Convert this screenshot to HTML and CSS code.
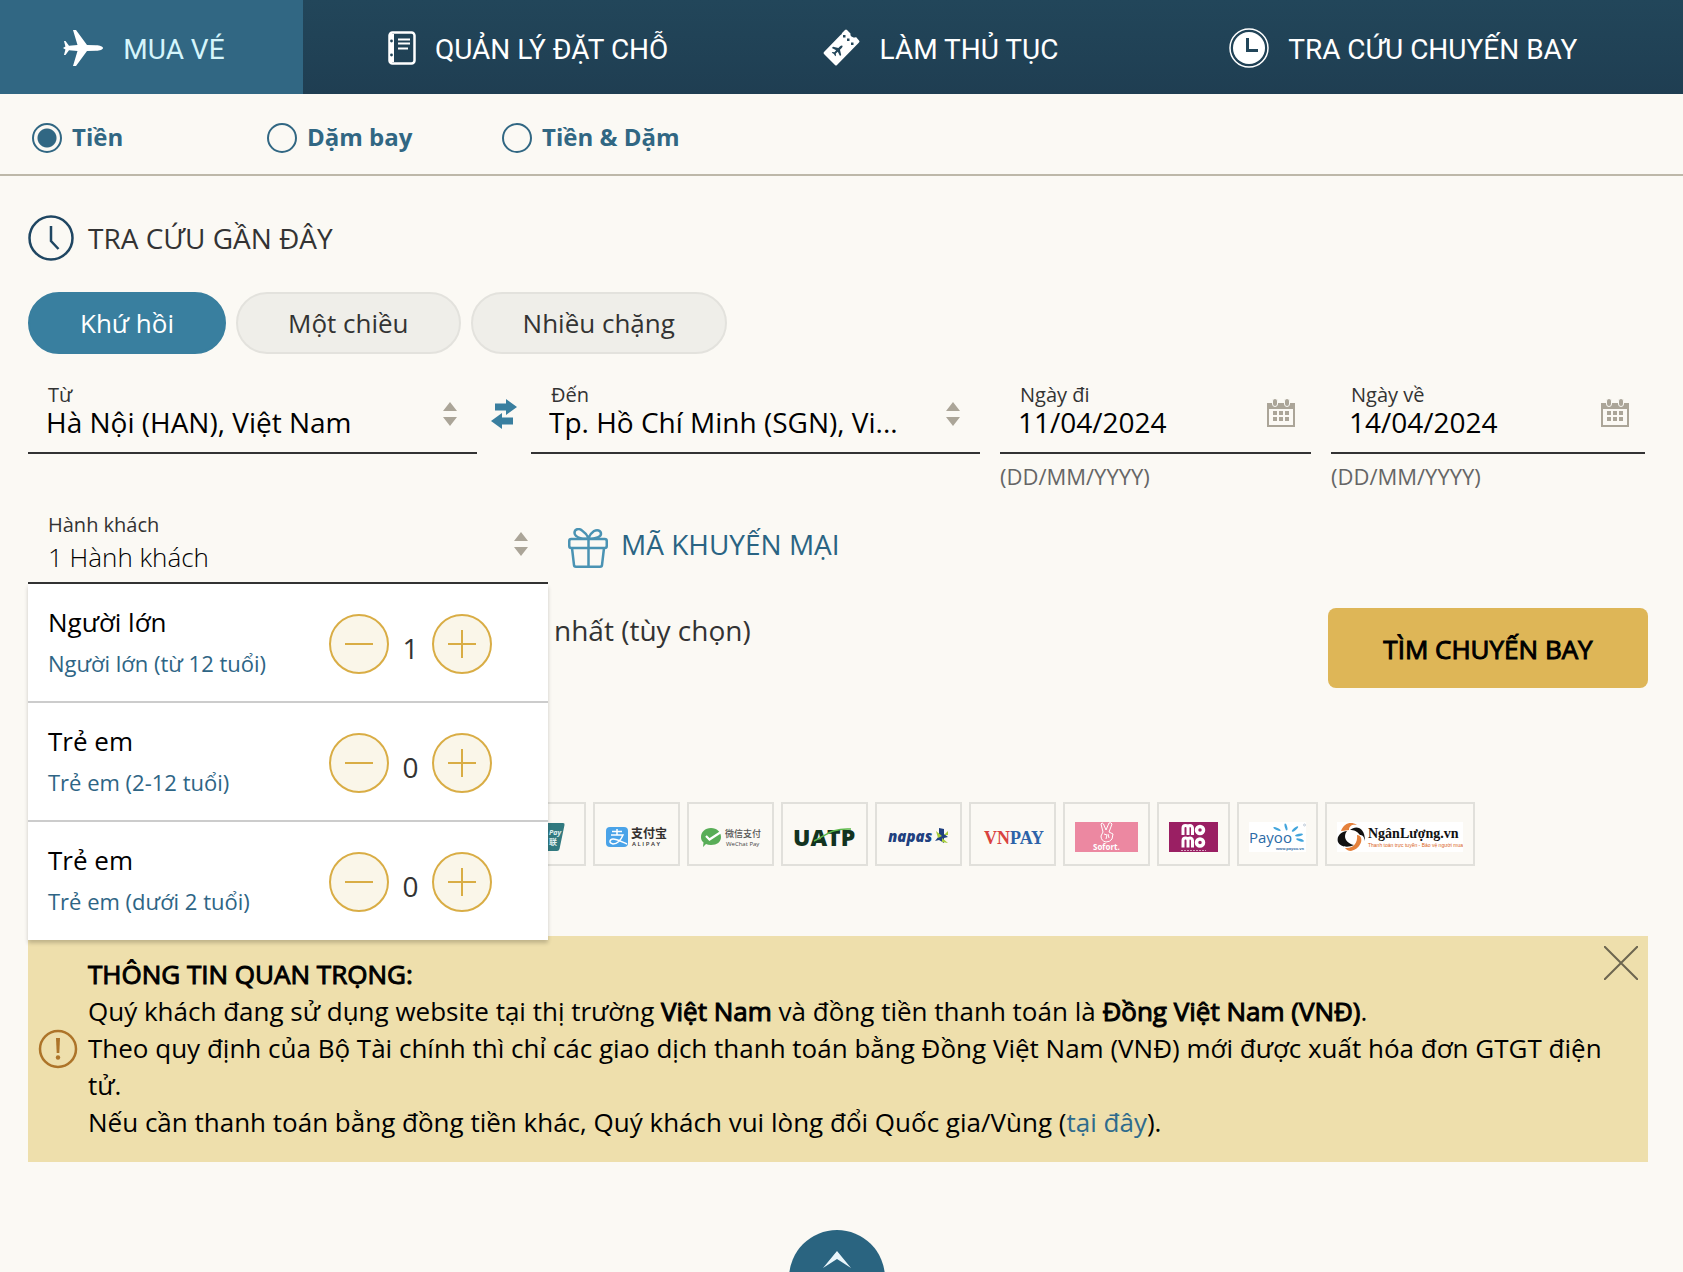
FILE: index.html
```html
<!DOCTYPE html>
<html lang="vi">
<head>
<meta charset="utf-8">
<meta name="viewport" content="width=device-width, initial-scale=1">
<title>Mua vé</title>
<link rel="stylesheet" href="styles.css">
</head>
<body>
<nav class="tabs">
  <a class="tab tab-active" href="#mua-ve">
    <svg class="tab-icon" width="42" height="38" viewBox="0 0 42 38" aria-hidden="true"><path fill="#fff" d="M41 19c0 1.500-3 2.600-7 2.800l-9 .3L14 37h-3l4.500-15L7 21.300 3.500 26H2l1.400-5.600L1 19l2.400-1.400L2 12h1.500L7 16.700l8.500-.7L11 1h3l11 14.900 9 .3c4 .2 7 1.300 7 2.800z"/></svg>
    <span>MUA VÉ</span>
  </a>
  <a class="tab" href="#quan-ly">
    <svg class="tab-icon" width="28" height="34" viewBox="0 0 28 34" aria-hidden="true"><rect x="1.500" y="1.500" width="25" height="31" rx="3" fill="none" stroke="#fff" stroke-width="2.500"/><path fill="#fff" d="M1 3h5v28H1z"/><path stroke="#fff" stroke-width="2" d="M10 8.500h12M10 12.500h12M10 17.500h10"/><circle cx="3.500" cy="10" r="1.400" fill="#22465a"/><circle cx="3.500" cy="24" r="1.400" fill="#22465a"/></svg>
    <span>QUẢN LÝ ĐẶT CHỖ</span>
  </a>
  <a class="tab" href="#lam-thu-tuc">
    <svg class="tab-icon" width="38" height="38" viewBox="0 0 38 38" aria-hidden="true"><path fill="#fff" d="M22 1q1-1 2 0l3.500 3.500q-.5 2.500 2 3.500 2 1 3.500 0l3 3.500q1 1 0 2L14 36q-1 1-2 0L1 25q-1-1 0-2L17.500 6q1.500-.5 1.500-2z"/><path fill="#22465a" d="M20 6h2.500v2.500H20zM24 9.500h2.500V12H24zM28 13.500h2.500V16H28z"/><path fill="#22465a" transform="translate(15 21) rotate(-45) scale(.82) translate(-15 -21)" d="M22.500 21c0 .9-1 1.300-2.500 1.400h-3L13.500 28h-2l1.700-5.600-3.200-.2L8.500 24H7.300l.6-3-.6-3h1.200l1.500 1.800 3.200-.2L11.500 14h2l3.500 5.600h3c1.500.1 2.500.5 2.500 1.400z"/></svg>
    <span>LÀM THỦ TỤC</span>
  </a>
  <a class="tab" href="#tra-cuu">
    <svg class="tab-icon" width="40" height="40" viewBox="0 0 40 40" aria-hidden="true"><circle cx="20" cy="20" r="19" fill="none" stroke="#fff" stroke-width="1.500"/><circle cx="20" cy="20" r="16" fill="#fff"/><path fill="none" stroke="#22465a" stroke-width="3" d="M18.500 10v12.500H29"/></svg>
    <span>TRA CỨU CHUYẾN BAY</span>
  </a>
</nav>

<form class="booking">
  <fieldset class="pay-modes">
    <label class="mode"><input type="radio" name="mode" checked><span>Tiền</span></label>
    <label class="mode"><input type="radio" name="mode"><span>Dặm bay</span></label>
    <label class="mode"><input type="radio" name="mode"><span>Tiền &amp; Dặm</span></label>
  </fieldset>

  <main class="content">
    <h2 class="recent">
      <svg width="46" height="46" viewBox="0 0 46 46" fill="none" stroke="#1f4662" stroke-width="2.500" aria-hidden="true"><circle cx="23" cy="23" r="21.500"/><path d="M23 11v15l7.500 8"/></svg>
      <span>TRA CỨU GẦN ĐÂY</span>
    </h2>

    <div class="trip-types">
      <button type="button" class="pill pill-active">Khứ hồi</button>
      <button type="button" class="pill">Một chiều</button>
      <button type="button" class="pill">Nhiều chặng</button>
    </div>

    <div class="route">
      <div class="field">
        <label for="from">Từ</label>
        <select id="from"><option>Hà Nội (HAN), Việt Nam</option></select>
        <svg class="field-icon" width="14" height="24" viewBox="0 0 14 24" aria-hidden="true"><path fill="#aba598" d="M7 0l7 9H0zM7 24l7-9H0z"/></svg>
      </div>
      <button type="button" class="swap" aria-label="Đổi chiều">
        <svg width="26" height="30" viewBox="0 0 26 30" aria-hidden="true"><path fill="#397f9f" d="M4 4.500h11V0l11 8-11 8v-4.500H4zM22 18.500H11V14L0 22l11 8v-4.500h11z"/></svg>
      </button>
      <div class="field">
        <label for="to">Đến</label>
        <select id="to"><option>Tp. Hồ Chí Minh (SGN), Vi...</option></select>
        <svg class="field-icon" width="14" height="24" viewBox="0 0 14 24" aria-hidden="true"><path fill="#aba598" d="M7 0l7 9H0zM7 24l7-9H0z"/></svg>
      </div>
      <div class="date depart">
        <div class="field">
          <label for="depart">Ngày đi</label>
          <input id="depart" type="text" value="11/04/2024">
          <svg class="field-icon" width="28" height="28" viewBox="0 0 28 28" aria-hidden="true"><path fill="#aba598" fill-rule="evenodd" d="M0 4h28v24H0zM2 10v16h24V10zM6 12h4v4H6zM12 12h4v4h-4zM18 12h4v4h-4zM6 18h4v4H6zM12 18h4v4h-4zM18 18h4v4h-4z"/><g fill="#aba598" stroke="#faf9f4"><rect x="5.500" y="-.500" width="5" height="8" rx="2.500"/><rect x="17.500" y="-.500" width="5" height="8" rx="2.500"/></g></svg>
        </div>
        <span class="hint">(DD/MM/YYYY)</span>
      </div>
      <div class="date">
        <div class="field">
          <label for="return">Ngày về</label>
          <input id="return" type="text" value="14/04/2024">
          <svg class="field-icon" width="28" height="28" viewBox="0 0 28 28" aria-hidden="true"><path fill="#aba598" fill-rule="evenodd" d="M0 4h28v24H0zM2 10v16h24V10zM6 12h4v4H6zM12 12h4v4h-4zM18 12h4v4h-4zM6 18h4v4H6zM12 18h4v4h-4zM18 18h4v4h-4z"/><g fill="#aba598" stroke="#faf9f4"><rect x="5.500" y="-.500" width="5" height="8" rx="2.500"/><rect x="17.500" y="-.500" width="5" height="8" rx="2.500"/></g></svg>
        </div>
        <span class="hint">(DD/MM/YYYY)</span>
      </div>
    </div>

    <div class="party">
      <div class="passengers">
        <div class="field field-passengers">
          <label for="passengers">Hành khách</label>
          <button type="button" id="passengers" aria-expanded="true">1 Hành khách</button>
          <svg class="field-icon" width="14" height="24" viewBox="0 0 14 24" aria-hidden="true"><path fill="#aba598" d="M7 0l7 9H0zM7 24l7-9H0z"/></svg>
        </div>
        <ul class="passenger-menu">
          <li>
            <div class="who"><strong>Người lớn</strong><span>Người lớn (từ 12 tuổi)</span></div>
            <button type="button" class="step minus" aria-label="Bớt"></button>
            <output>1</output>
            <button type="button" class="step plus" aria-label="Thêm"></button>
          </li>
          <li>
            <div class="who"><strong>Trẻ em</strong><span>Trẻ em (2-12 tuổi)</span></div>
            <button type="button" class="step minus" aria-label="Bớt"></button>
            <output>0</output>
            <button type="button" class="step plus" aria-label="Thêm"></button>
          </li>
          <li>
            <div class="who"><strong>Trẻ em</strong><span>Trẻ em (dưới 2 tuổi)</span></div>
            <button type="button" class="step minus" aria-label="Bớt"></button>
            <output>0</output>
            <button type="button" class="step plus" aria-label="Thêm"></button>
          </li>
        </ul>
      </div>
      <a class="promo" href="#khuyen-mai">
        <svg width="40" height="40" viewBox="0 0 40 40" fill="none" stroke="#4a93b3" stroke-width="2.500" aria-hidden="true"><rect x="1.250" y="11" width="37.500" height="9" rx="2"/><path d="M4 20l2 17q0 1.700 2 1.700h24q2 0 2-1.700l2-17M20.500 11v28M20.500 10C17 12 7 10 6.500 5 6.500 1 11 0 14 2.500 17 4.500 19 7 20.500 10zM20.500 10c3 1.500 12 0 12.500-4 0-4-4-4.500-7-3-3 2-4.500 4.500-5.500 7z"/></svg>
        <span>MÃ KHUYẾN MẠI</span>
      </a>
    </div>

    <div class="search-row">
      <span class="lowest">nhất (tùy chọn)</span>
      <button type="submit" class="search">TÌM CHUYẾN BAY</button>
    </div>

    <ul class="payments">
      <li class="pay">
        <svg width="63" height="30" viewBox="0 0 63 30"><path fill="#327a80" d="M20 1h32q2 0 1.500 2l-5 24q-.5 2-2.500 2H14z"/><text x="38" y="13" font-size="7" font-weight="700" font-style="italic" fill="#e3f2f2">Pay</text><text x="38" y="23" font-size="8" font-weight="700" fill="#e3f2f2">联</text></svg>
      </li>
      <li class="pay">
        <svg width="63" height="30" viewBox="0 0 63 30"><rect x="1" y="5" width="22" height="20" rx="4" fill="#4aa3e8"/><path fill="none" stroke="#fff" stroke-width="1.500" d="M7 9.500h10M12 7v6M6 13h12c-2 5-6 9-10 9-5-1-3-5 0-5 4 0 9 3 14 5"/><text x="26" y="16" font-size="12" font-weight="700" fill="#33302f">支付宝</text><text x="27" y="24" font-size="6" font-weight="600" fill="#33302f">A L I P A Y</text></svg>
      </li>
      <li class="pay">
        <svg width="63" height="30" viewBox="0 0 63 30"><path fill="#58ad57" d="M12 6c6 0 10 4 10 9s-4 8-10 8q-3 0-5-1l-3 3 .5-4.500C2.500 19 2 17 2 15c0-5 4-9 10-9z"/><path fill="none" stroke="#fff" stroke-width="2.200" d="M7 14l3.500 3.500L22 10"/><text x="26" y="15" font-size="9" font-weight="500" fill="#555">微信支付</text><text x="27" y="24" font-size="6" fill="#444">WeChat Pay</text></svg>
      </li>
      <li class="pay">
        <svg width="63" height="30" viewBox="0 0 63 30"><text x="0" y="24" font-size="23" font-weight="800" fill="#12331f">UATP</text><path fill="none" stroke="#5cb949" stroke-width="1.500" d="M21 19C34 13 38 6 58 7"/></svg>
      </li>
      <li class="pay">
        <svg width="63" height="30" viewBox="0 0 63 30"><text x="1" y="20" font-size="15" font-weight="800" font-style="italic" fill="#20407f">napas</text><path fill="#20407f" d="M52 6l5 1v5l4 3-4 1v5l-5-3-4 1 4-5z"/><path fill="#a6cd3d" d="M49 9l6 5-4 2zM57 13l4-4v4zM55 16l6 5-6-1z"/></svg>
      </li>
      <li class="pay">
        <svg width="63" height="30" viewBox="0 0 63 30"><text x="3" y="22" class="vnpay" font-size="18" font-weight="700" fill="#d9423f">VN<tspan fill="#2c63a8">PAY</tspan></text></svg>
      </li>
      <li class="pay">
        <svg width="63" height="30" viewBox="0 0 63 30"><path fill="#ec88a1" d="M0 0h63v30H0z"/><path fill="none" stroke="#fff" stroke-width="1" stroke-linejoin="round" d="M28 10L26 2q1-2 2.500 0L31 8l3-7q2-1 3 1l-3 8 4 2-1 5q-2 3-6 3-5-1-5-6zM29 12l3 1-1 4M33 12l1 4"/><text x="18" y="28" font-size="8" font-weight="700" fill="#fff">Sofort.</text></svg>
      </li>
      <li class="pay">
        <svg width="49" height="30" viewBox="0 0 49 30"><path fill="#9a1f63" d="M0 0h49v30H0z"/><path fill="none" stroke="#fff" stroke-width="3" d="M14 13V6q0-2.500 2.500-2.500T19 6v7M19 6q0-2.500 2-2.500T23.500 6v7M14 25.500v-7q0-2.500 2.500-2.500t2.500 2.500v7M19 18.500q0-2.500 2-2.500t2.500 2.500v7"/><g fill="none" stroke="#fff" stroke-width="3.500"><circle cx="31" cy="8" r="3.500"/><circle cx="31" cy="20.500" r="3.500"/></g><path stroke="#d9a3c1" stroke-dasharray="2 1" d="M12 28.500h25"/></svg>
      </li>
      <li class="pay">
        <svg width="57" height="30" viewBox="0 0 57 30"><path fill="#fff" d="M0 0h57v30H0z"/><text x="0" y="21" font-size="15" fill="#2b6aa6">Payoo</text><g fill="#42a5dc"><ellipse cx="28" cy="7" rx="4" ry="1.200" transform="rotate(25 28 7)"/><ellipse cx="37" cy="5" rx="3.500" ry="1.200" transform="rotate(75 37 5)"/><ellipse cx="46" cy="7" rx="4" ry="1.200" transform="rotate(-40 46 7)"/><ellipse cx="50" cy="13" rx="4" ry="1.200" transform="rotate(-12 50 13)"/><ellipse cx="51" cy="18" rx="4" ry="1.200" transform="rotate(18 51 18)"/></g><circle cx="55.500" cy="3" r="1" fill="none" stroke="#a9b9cc" stroke-width=".7"/><text x="27" y="28" class="slogan" font-size="4" font-weight="700" fill="#2b6aa6">www.payoo.vn</text></svg>
      </li>
      <li class="pay">
        <svg width="126" height="30" viewBox="0 0 126 30"><path fill="#fff" d="M0 0h126v30H0z"/><path fill="#e5813c" d="M4 9C7 1 14-1 20 3c-5-1-8 1-8 5-2 0-5 1-8 1z"/><path fill="#111" d="M13 8c6-5 15-3 15 11-1-4-2-6-5-6-3-4-6-5-10-5z"/><path fill="#e5813c" d="M20 13c7 0 6 13-6 16-3 0-5-2-6-3 8 1 13-5 12-13z"/><path fill="#111" d="M1 20c-2-6 4-11 9-11-4 5-2 12 7 14-6 3-14 2-16-3z"/><text x="31" y="16" class="nganluong" font-size="14" font-weight="700" fill="#111">NgânLượng.vn</text><text x="31" y="25" class="slogan" font-size="5" fill="#d95f22">Thanh toán trực tuyến - Bảo vệ người mua</text></svg>
      </li>
    </ul>
  </main>
</form>

<section class="notice">
  <svg class="notice-icon" width="40" height="40" viewBox="0 0 40 40" aria-hidden="true"><circle cx="20" cy="20" r="18" fill="none" stroke="#ad7429" stroke-width="2.500"/><path fill="#ad7429" d="M18 9h4l-.7 15h-2.600z"/><circle cx="20" cy="28.500" r="2.200" fill="#ad7429"/></svg>
  <div class="notice-text">
    <p><b>THÔNG TIN QUAN TRỌNG:</b></p>
    <p>Quý khách đang sử dụng website tại thị trường <b>Việt Nam</b> và đồng tiền thanh toán là <b>Đồng Việt Nam (VNĐ)</b>.</p>
    <p>Theo quy định của Bộ Tài chính thì chỉ các giao dịch thanh toán bằng Đồng Việt Nam (VNĐ) mới được xuất hóa đơn GTGT điện tử.</p>
    <p>Nếu cần thanh toán bằng đồng tiền khác, Quý khách vui lòng đổi Quốc gia/Vùng (<a href="#tai-day">tại đây</a>).</p>
  </div>
  <button type="button" class="close" aria-label="Đóng">
    <svg width="34" height="34" viewBox="0 0 34 34" aria-hidden="true"><path stroke="#6d6650" stroke-width="2" d="M0 0l34 34M34 0L0 34"/></svg>
  </button>
</section>

<footer class="footer">
  <button type="button" class="to-top" aria-label="Lên đầu trang">
    <svg width="28" height="17" viewBox="0 0 28 17" aria-hidden="true"><path fill="#eaf6fb" d="M14 0l14 17-14-9L0 17z"/></svg>
  </button>
</footer>
</body>
</html>
```
FILE: styles.css
```css
* {
  box-sizing: border-box;
}

body {
  margin: 0;
  min-height: 100vh;
  display: flex;
  flex-direction: column;
  background: #fbf9f4;
  color: #333;
  font-family: "Open Sans", "Noto Sans CJK SC", sans-serif;
  font-size: 28px;
  line-height: 36px;
}

button,
input,
select {
  margin: 0;
  padding: 0;
  border: 0;
  background: none;
  color: inherit;
  font: inherit;
}

svg {
  display: block;
  flex: none;
}

a {
  color: #2e6b8c;
  text-decoration: none;
}

ul,
p,
h2 {
  margin: 0;
  padding: 0;
  list-style: none;
}

/* Top tabs */
.tabs {
  display: grid;
  grid-template-columns: 18% 27% 22% 33%;
  height: 94px;
  background: linear-gradient(#22465a, #1f3e52);
}

.tab {
  display: flex;
  align-items: center;
  justify-content: center;
  gap: 19px;
  padding: 2px 4px 0 0;
  color: #fff;
  font-family: Roboto, "Open Sans", sans-serif;
  white-space: nowrap;
}

.tab span {
  padding-top: 4px;
}

.tab-active {
  padding-right: 16px;
  background: #316783;
  color: #d5f5fb;
}

/* Payment mode */
.pay-modes {
  display: flex;
  height: 82px;
  margin: 0;
  padding: 8px 0 0 32px;
  border: 0;
  border-bottom: 2px solid #bdb8a9;
}

.mode {
  flex: 0 0 235px;
  display: flex;
  align-items: center;
  gap: 10px;
  color: #316783;
  font-size: 24px;
  font-weight: 700;
}

.mode span {
  padding-bottom: 2px;
}

.mode input {
  appearance: none;
  width: 30px;
  height: 30px;
  border: 2px solid #316783;
  border-radius: 50%;
}

.mode input:checked {
  background: radial-gradient(circle, #316783 9px, transparent 10px);
}

.content {
  padding: 39px 35px 70px 28px;
}

.recent {
  display: flex;
  align-items: center;
  gap: 14px;
  font-size: 28px;
  font-weight: 400;
}

/* Trip type */
.trip-types {
  display: flex;
  gap: 10px;
  margin-top: 31px;
}

.pill {
  height: 62px;
  padding: 0 50px;
  border: 2px solid #e3e2dd;
  border-radius: 31px;
  background: #efeee9;
  font-size: 26px;
}

.pill-active {
  border-color: #397f9f;
  background: #397f9f;
  color: #fff;
}

/* Route and dates */
.route {
  display: grid;
  grid-template-columns: 449fr 54px 449fr 331fr 334fr;
  margin-top: 24px;
  padding-right: 3px;
}

.field {
  position: relative;
  display: flex;
  flex-direction: column;
  height: 76px;
  padding-left: 18px;
  border-bottom: 2px solid #333;
}

.field label {
  padding-left: 2px;
  font-size: 20px;
  line-height: 34px;
}

.field select,
.field input {
  appearance: none;
  width: 100%;
  height: 36px;
  margin-top: -8px;
  padding-right: 60px;
  color: #000;
  line-height: 36px;
}

.field-icon {
  position: absolute;
  right: 20px;
  top: 24px;
}

.date {
  padding-left: 20px;
}

.date .field-icon {
  right: 16px;
  top: 21px;
}

.hint {
  display: block;
  margin-top: 4px;
  color: #666;
  font-size: 22px;
}

.swap {
  align-self: start;
  justify-self: center;
  margin-top: 21px;
}

/* Passengers */
.party {
  display: flex;
  gap: 20px;
  margin-top: 14px;
}

.passengers {
  position: relative;
  flex: 0 0 520px;
}

.field-passengers button {
  margin-top: -3px;
  padding-left: 2px;
  color: #000;
  font-size: 26px;
  font-weight: 300;
  text-align: left;
}

.passenger-menu {
  position: absolute;
  z-index: 2;
  top: 100%;
  left: 0;
  right: 0;
  background: #fff;
  box-shadow: 0 3px 4px rgba(0, 0, 0, 0.2);
}

.passenger-menu li {
  display: flex;
  align-items: center;
  height: 119px;
  padding: 2px 56px 0 20px;
  border-bottom: 2px solid #ccc;
}

.passenger-menu li:last-child {
  height: 118px;
  border-bottom: 0;
}

.who {
  flex: 1;
  padding-bottom: 3px;
}

.who strong,
.who span {
  display: block;
}

.who strong {
  color: #000;
  font-size: 26px;
  font-weight: 400;
}

.who span {
  margin-top: 5px;
  color: #2e6585;
  font-size: 22px;
}

.passenger-menu output {
  width: 43px;
  padding-top: 8px;
  text-align: center;
}

.step {
  width: 60px;
  height: 60px;
  border: 2px solid #d9ad45;
  border-radius: 50%;
  background: #faf6e9 linear-gradient(#d9ad45, #d9ad45) center / 28px 2px no-repeat;
}

.plus {
  background-image: linear-gradient(#d9ad45, #d9ad45), linear-gradient(#d9ad45, #d9ad45);
  background-size: 28px 2px, 2px 28px;
}

.promo {
  display: flex;
  align-items: center;
  gap: 13px;
  height: 72px;
  color: #2a6483;
}

.promo svg {
  margin-top: 8px;
}

/* Search */
.search-row {
  display: flex;
  align-items: flex-start;
  justify-content: space-between;
  margin-top: 24px;
  padding-left: 526px;
}

.lowest {
  padding-top: 4px;
}

.search {
  width: 320px;
  height: 80px;
  padding-top: 2px;
  border-radius: 8px;
  background: #deb657;
  color: #000;
  font-size: 26px;
  -webkit-text-stroke: 1px #000;
}

/* Payment partners */
.payments {
  display: flex;
  gap: 7px;
  margin-top: 114px;
  padding-left: 471px;
}

.pay {
  display: flex;
  align-items: center;
  justify-content: center;
  height: 64px;
  padding: 5px 10px 0;
  border: 2px solid #e1e0db;
}

.vnpay,
.nganluong {
  font-family: "Liberation Serif", serif;
}

.slogan {
  font-family: "Liberation Sans", sans-serif;
}

/* Notice */
.notice {
  position: relative;
  display: flex;
  align-items: center;
  gap: 10px;
  margin: 0 35px 0 28px;
  padding: 20px 40px 21px 10px;
  background: #eedfac;
  color: #000;
  font-size: 26px;
  line-height: 37px;
}

.notice b {
  font-weight: 400;
  -webkit-text-stroke: 1px #000;
}

.close {
  position: absolute;
  top: 10px;
  right: 10px;
}

/* Back to top */
.footer {
  flex: 0 0 42px;
  margin-top: auto;
  display: flex;
  justify-content: center;
  align-items: flex-start;
  overflow: hidden;
  padding-right: 9px;
}

.to-top {
  flex: none;
  display: flex;
  justify-content: center;
  width: 96px;
  height: 96px;
  padding-top: 21px;
  border-radius: 50%;
  background: #2a6480;
}
```
